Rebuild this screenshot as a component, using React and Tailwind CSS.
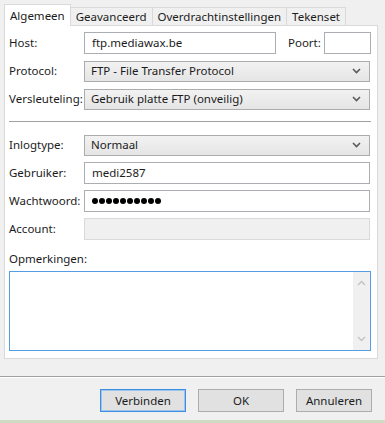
import React from 'react';

const Chevron = () => (
  <svg width="9" height="6" viewBox="0 0 9 6" className="shrink-0">
    <path d="M1 1l3.5 3.5L8 1" fill="none" stroke="#5a5a5a" strokeWidth="1.6" />
  </svg>
);

const Field = ({ label, children }) => (
  <div className="flex items-center h-[22px]">
    <span className="w-[75px] shrink-0">{label}</span>
    {children}
  </div>
);

const TextBox = ({ value, className = '' }) => (
  <div className={`h-[22px] border border-[#abadb3] bg-white flex items-center px-[7px] ${className}`}>
    {value}
  </div>
);

const Select = ({ value }) => (
  <div className="h-[21px] w-[286px] border border-[#acacac] bg-gradient-to-b from-[#f2f2f2] to-[#e5e5e5] flex items-center pl-[6px] pr-[8px] justify-between">
    <span>{value}</span>
    <Chevron />
  </div>
);

const tabs = ['Algemeen', 'Geavanceerd', 'Overdrachtinstellingen', 'Tekenset'];

export default function App() {
  return (
    <div
      className="w-[385px] h-[423px] bg-[#f0f0f0] flex flex-col text-[11.5px] text-[#1b1b1b] overflow-hidden"
      style={{ fontFamily: '"Noto Sans", "Open Sans", sans-serif' }}
    >
      {/* tabs */}
      <div className="flex items-end h-[25px] pl-[4px] relative z-10">
        {tabs.map((t, i) =>
          i === 0 ? (
            <div key={t} className="px-[5px] bg-white border border-b-0 border-[#d9d9d9] flex items-center mb-[-1px] h-[22px] pt-[1px]">
              {t}
            </div>
          ) : (
            <div key={t} className="h-[18px] px-[5px] bg-[#f0f0f0] border border-b-0 border-l-0 border-[#d9d9d9] flex items-center">
              {t}
            </div>
          )
        )}
      </div>

      {/* panel */}
      <div className="ml-[4px] w-[374px] h-[334px] shrink-0 bg-white border border-[#d9d9d9] pl-[4px] pr-[6px] pt-[6px] flex flex-col">
        <div className="flex flex-col gap-[6px]">
          <Field label="Host:">
            <TextBox value="ftp.mediawax.be" className="w-[192px]" />
            <span className="ml-[12px] w-[36px]">Poort:</span>
            <TextBox value="" className="w-[47px]" />
          </Field>
          <Field label="Protocol:">
            <Select value="FTP - File Transfer Protocol" />
          </Field>
          <Field label="Versleuteling:">
            <Select value="Gebruik platte FTP (onveilig)" />
          </Field>
        </div>

        <div className="mt-[11px] h-[2px] border-t border-[#a0a0a0] border-b border-b-white" />

        <div className="mt-[11px] flex flex-col gap-[6px]">
          <Field label="Inlogtype:">
            <Select value="Normaal" />
          </Field>
          <Field label="Gebruiker:">
            <TextBox value="medi2587" className="w-[286px]" />
          </Field>
          <Field label="Wachtwoord:">
            <div className="h-[22px] w-[286px] border border-[#abadb3] bg-white flex items-center px-[7px] gap-[1px]">
              {Array.from({ length: 10 }).map((_, i) => (
                <div key={i} className="w-[6px] h-[6px] rounded-full bg-black" />
              ))}
            </div>
          </Field>
          <Field label="Account:">
            <div className="h-[22px] w-[286px] border border-[#d9d9d9] bg-[#f0f0f0]" />
          </Field>
        </div>

        <div className="mt-[12px] leading-[14px]">Opmerkingen:</div>
        <div className="mt-[5px] w-[362px] h-[80px] border border-[#569de5] bg-white flex justify-end">
          <div className="w-[17px] bg-[#f0f0f0] flex flex-col justify-between items-center py-[8px]">
            <svg width="9" height="6" viewBox="0 0 9 6">
              <path d="M1 5l3.5-3.5L8 5" fill="none" stroke="#c2c2c2" strokeWidth="1.4" />
            </svg>
            <svg width="9" height="6" viewBox="0 0 9 6">
              <path d="M1 1l3.5 3.5L8 1" fill="none" stroke="#c2c2c2" strokeWidth="1.4" />
            </svg>
          </div>
        </div>
      </div>

      {/* separator */}
      <div className="mt-[17px] h-[2px] shrink-0 border-t border-[#a0a0a0] border-b border-b-white" />

      {/* buttons */}
      <div className="mt-[11px] flex pl-[100px] gap-[12px]">
        <button className="w-[86px] h-[23px] border border-[#3c8ee0] bg-[#e1e1e1] outline outline-1 outline-[#9cc5ee] -outline-offset-2">Verbinden</button>
        <button className="w-[86px] h-[23px] border border-[#adadad] bg-[#e1e1e1]">OK</button>
        <button className="w-[76px] h-[23px] border border-[#adadad] bg-[#e1e1e1]">Annuleren</button>
      </div>

      <div className="mt-auto h-[3px] shrink-0 bg-[#cfdcc3]" />
    </div>
  );
}
